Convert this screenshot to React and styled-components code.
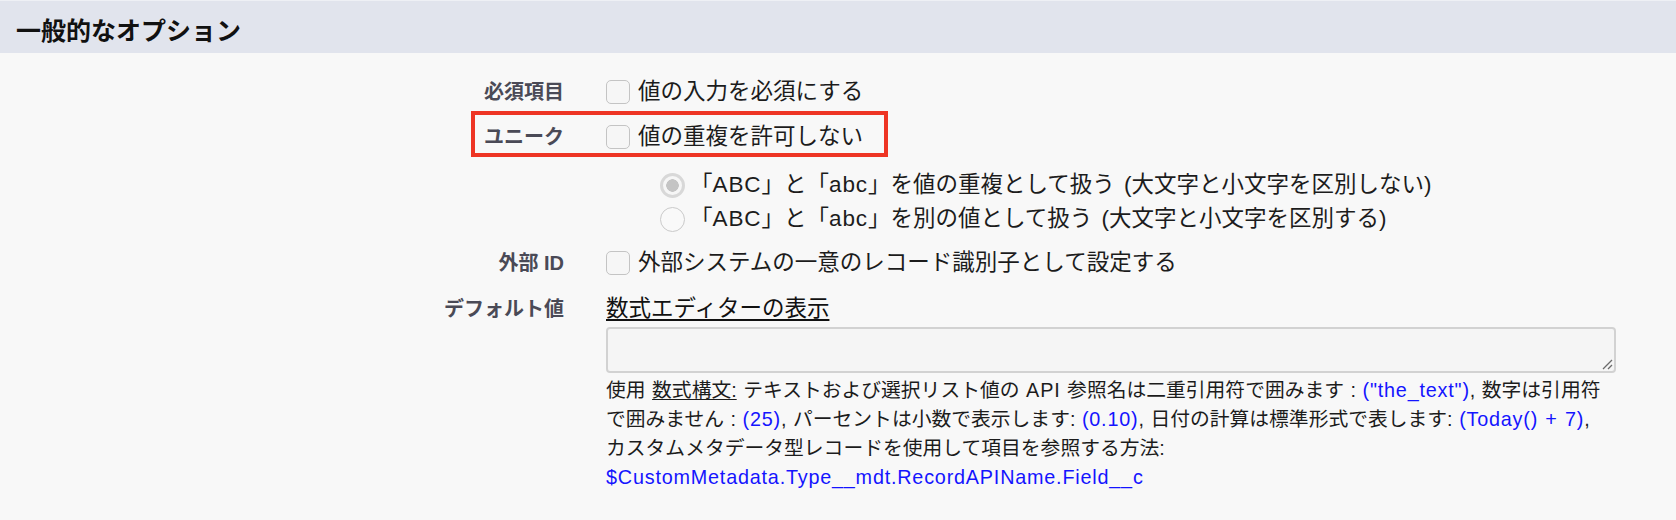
import styled, { createGlobalStyle } from "styled-components";

const GlobalStyle = createGlobalStyle`
  html, body {
    margin: 0;
    padding: 0;
    background: #f8f8f8;
  }
  body {
    font-family: "Liberation Sans", "Noto Sans CJK JP", sans-serif;
    color: #1c1c1c;
  }
`;

const Page = styled.div`
  width: 1676px;
  height: 520px;
  background: #f8f8f8;
  overflow: hidden;
`;

const SectionHeader = styled.h2`
  margin: 0;
  height: 53px;
  box-sizing: border-box;
  border-top: 1px solid #eef0f5;
  background: #e1e4ed;
  padding: 4px 16px 0;
  display: flex;
  align-items: center;
  font-size: 25px;
  font-weight: 700;
  color: #111;
`;

const Body = styled.div`
  padding-top: 17px;
`;

const Row = styled.div`
  position: relative;
  display: grid;
  grid-template-columns: 564px 1fr;
  column-gap: 42px;
  align-items: ${(p) => (p.$top ? "start" : "center")};
  min-height: ${(p) => (p.$top ? 0 : p.$h || 46)}px;
  margin-top: ${(p) => (p.$top ? 9 : 0)}px;
`;

const Label = styled.div`
  text-align: right;
  font-size: 20px;
  font-weight: 700;
  line-height: 28px;
  color: #4a4a56;
`;

const Highlight = styled.div`
  position: absolute;
  left: 471px;
  top: -3px;
  width: 417px;
  height: 46px;
  box-sizing: border-box;
  border: 4px solid #ee3524;
  pointer-events: none;
`;

const CheckLabel = styled.label`
  display: flex;
  align-items: center;
  gap: 8px;
  font-size: 22.5px;
  line-height: 28px;
`;

const Checkbox = styled.input.attrs({ type: "checkbox" })`
  appearance: none;
  margin: 0;
  width: 24px;
  height: 24px;
  box-sizing: border-box;
  border: 1.5px solid #c4c4c4;
  border-radius: 5px;
  background: #f6f6f6;
`;

const RadioList = styled.div`
  padding: 8px 0 4px 54px;
`;

const RadioRow = styled.label`
  display: flex;
  align-items: center;
  gap: 5px;
  height: 34px;
  line-height: 34px;
  font-size: 22.5px;
  white-space: nowrap;
  word-spacing: 3px;
`;

const Radio = styled.input.attrs({ type: "radio" })`
  appearance: none;
  margin: 0;
  width: 25px;
  height: 25px;
  box-sizing: border-box;
  border-radius: 50%;
  border: ${(p) => (p.checked ? "3px solid #d8d8d8" : "1.5px solid #cacaca")};
  background: ${(p) =>
    p.checked
      ? "radial-gradient(circle, #c4c4c4 0 6px, #f6f6f6 6.5px)"
      : "#f9f9f9"};
`;

const Latin = styled.span`
  letter-spacing: 0.9px;
`;

const Control = styled.div`
  display: flex;
  flex-direction: column;
`;

const EditorLink = styled.a`
  font-size: 22.5px;
  line-height: 28px;
  color: #111;
  text-decoration: underline;
  text-underline-offset: 3px;
  align-self: flex-start;
`;

const FormulaWrap = styled.div`
  position: relative;
  margin-top: 4px;
  width: 1010px;
  height: 46px;
`;

const FormulaBox = styled.textarea`
  display: block;
  width: 100%;
  height: 100%;
  box-sizing: border-box;
  border: 2px solid #d2d2d2;
  border-radius: 4px;
  background: #f5f5f5;
  font: inherit;
  resize: none;
`;

const Grip = styled.svg`
  position: absolute;
  right: 3px;
  bottom: 3px;
  width: 14px;
  height: 14px;
  pointer-events: none;
`;

const Help = styled.div`
  margin-top: 3px;
  font-size: 19.8px;
  line-height: 29px;
  color: #1c1c1c;
  white-space: nowrap;
  word-spacing: 1px;
`;

const Syntax = styled.span`
  text-decoration: underline;
  text-underline-offset: 2px;
`;

const Sample = styled.span`
  color: #1414ff;
  letter-spacing: 0.8px;
`;

const options = [
  { id: "ci", a: "ABC", b: "abc", after: "」を値の重複として扱う", note: "(大文字と小文字を区別しない)", checked: true },
  { id: "cs", a: "ABC", b: "abc", after: "」を別の値として扱う", note: "(大文字と小文字を区別する)", checked: false },
];

export default function App() {
  return (
    <Page>
      <GlobalStyle />
      <SectionHeader>一般的なオプション</SectionHeader>
      <Body>
        <Row $h={44}>
          <Label>必須項目</Label>
          <CheckLabel>
            <Checkbox />
            値の入力を必須にする
          </CheckLabel>
        </Row>
        <Row>
          <Label>ユニーク</Label>
          <CheckLabel>
            <Checkbox />
            値の重複を許可しない
          </CheckLabel>
          <Highlight />
        </Row>
        <Row>
          <span />
          <RadioList>
            {options.map((o) => (
              <RadioRow key={o.id}>
                <Radio name="case" checked={o.checked} disabled readOnly />
                <span>
                  「<Latin>{o.a}</Latin>」と「<Latin>{o.b}</Latin>
                  {o.after} {o.note}
                </span>
              </RadioRow>
            ))}
          </RadioList>
        </Row>
        <Row>
          <Label>外部 ID</Label>
          <CheckLabel>
            <Checkbox />
            外部システムの一意のレコード識別子として設定する
          </CheckLabel>
        </Row>
        <Row $top>
          <Label>デフォルト値</Label>
          <Control>
            <EditorLink href="#">数式エディターの表示</EditorLink>
            <FormulaWrap>
              <FormulaBox />
              <Grip viewBox="0 0 14 14">
                <path d="M13 4 L4 13 M13 9 L9 13" stroke="#6b6b6b" strokeWidth="1.3" fill="none" />
              </Grip>
            </FormulaWrap>
            <Help>
              使用 <Syntax>数式構文:</Syntax> テキストおよび選択リスト値の <Latin>API</Latin> 参照名は二重引用符で囲みます : <Sample>("the_text")</Sample>, 数字は引用符
              <br />
              で囲みません : <Sample>(25)</Sample>, パーセントは小数で表示します: <Sample>(0.10)</Sample>, 日付の計算は標準形式で表します: <Sample>(Today() + 7)</Sample>,
              <br />
              カスタムメタデータ型レコードを使用して項目を参照する方法:
              <br />
              <Sample>$CustomMetadata.Type__mdt.RecordAPIName.Field__c</Sample>
            </Help>
          </Control>
        </Row>
      </Body>
    </Page>
  );
}
